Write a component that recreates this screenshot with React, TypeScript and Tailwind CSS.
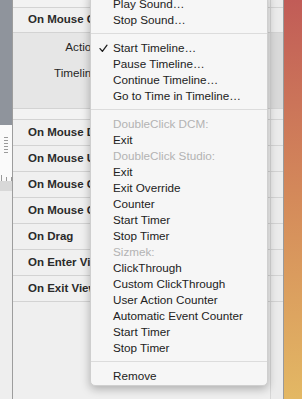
const events = [
  "On Mouse Down",
  "On Mouse Up",
  "On Mouse Click",
  "On Mouse Click Outside",
  "On Drag",
  "On Enter View",
  "On Exit View",
];

type Entry =
  | { kind: "item"; label: string; checked?: boolean }
  | { kind: "header"; label: string }
  | { kind: "sep" };

const menu: Entry[] = [
  { kind: "item", label: "Play Sound…" },
  { kind: "item", label: "Stop Sound…" },
  { kind: "sep" },
  { kind: "item", label: "Start Timeline…", checked: true },
  { kind: "item", label: "Pause Timeline…" },
  { kind: "item", label: "Continue Timeline…" },
  { kind: "item", label: "Go to Time in Timeline…" },
  { kind: "sep" },
  { kind: "header", label: "DoubleClick DCM:" },
  { kind: "item", label: "Exit" },
  { kind: "header", label: "DoubleClick Studio:" },
  { kind: "item", label: "Exit" },
  { kind: "item", label: "Exit Override" },
  { kind: "item", label: "Counter" },
  { kind: "item", label: "Start Timer" },
  { kind: "item", label: "Stop Timer" },
  { kind: "header", label: "Sizmek:" },
  { kind: "item", label: "ClickThrough" },
  { kind: "item", label: "Custom ClickThrough" },
  { kind: "item", label: "User Action Counter" },
  { kind: "item", label: "Automatic Event Counter" },
  { kind: "item", label: "Start Timer" },
  { kind: "item", label: "Stop Timer" },
  { kind: "sep" },
  { kind: "item", label: "Remove" },
];

function Row({ children, className = "", side = "bg-[#ebebeb]" }: { children?: React.ReactNode; className?: string; side?: string }) {
  return (
    <div className={`flex shrink-0 border-b border-[#d3d3d3] ${className}`}>
      <div className="min-w-0 flex-1 overflow-hidden">{children}</div>
      <div className={`w-[13px] shrink-0 border-l border-[#d6d6d6] ${side}`} />
    </div>
  );
}

function Check() {
  return (
    <svg width="9" height="9" viewBox="0 0 9 9" fill="none">
      <path d="M1 4.6 L3.4 7.4 L8 1.2" stroke="#1f1f1f" strokeWidth="1.3" strokeLinecap="round" strokeLinejoin="round" />
    </svg>
  );
}

export default function App() {
  return (
    <div className="relative flex h-[399px] w-[302px] overflow-hidden bg-[#efefef] font-['Liberation_Sans',Arial,sans-serif]">
      {/* canvas edge with ruler */}
      <div className="flex w-[13px] shrink-0 flex-col border-r border-[#9d9d9d]">
        <div className="h-[125px] bg-[#8f949c]" />
        <div className="flex h-[56px] flex-col items-center bg-[#fafafa] pt-[12px]">
          <svg width="12" height="44" viewBox="0 0 12 44">
            <g stroke="#9a9a9a" strokeWidth="1">
              <path d="M4 0.5h4M4 3.5h4M4 6.5h4M4 9.5h4M4 12.5h4M4 15.5h4" />
              <path d="M1.5 38v6M6.5 40v4M11.5 40v4" />
            </g>
          </svg>
        </div>
        <div className="h-[10px] bg-[#d8d8d8]" />
        <div className="flex-1 bg-[#eeeeee]" />
      </div>

      {/* event list */}
      <div className="flex flex-1 flex-col">
        <Row className="h-[8px] bg-[#f2f2f2]" />
        <Row className="h-[25px] bg-[#f0f0f0]">
          <div className="flex h-full items-center pl-[15px] text-[11.5px] font-bold text-[#2a2a2a]">On Mouse Click</div>
        </Row>
        <Row className="h-[76px] bg-[#e6e6e6]" side="bg-[#d9d9d9]">
          <div className="flex flex-col gap-[10px] pt-[6px] text-[11.7px] text-[#262626]">
            <div className="flex h-[16px] w-[88px] items-center justify-end">Action:</div>
            <div className="flex h-[16px] w-[88px] items-center justify-end">Timeline:</div>
          </div>
        </Row>
        <Row className="h-[11px] bg-[#f3f3f3]" />
        {events.map((e) => (
          <Row key={e} className="h-[26px] bg-[#f0f0f0]">
            <div className="flex h-full items-center pl-[15px] text-[11.5px] font-bold text-[#2a2a2a] whitespace-nowrap">{e}</div>
          </Row>
        ))}
        <div className="flex flex-1">
          <div className="flex-1 bg-[#efefef]" />
          <div className="w-[13px] border-l border-[#d6d6d6] bg-[#ebebeb]" />
        </div>
      </div>

      {/* timeline colour strip */}
      <div className="w-[19px] shrink-0 border-l border-[#9a9a9a] bg-gradient-to-b from-[#c15c57] via-[#d48a5a] to-[#e3b864]" />

      {/* popup menu */}
      <div className="absolute left-[90px] top-[-9px] w-[178px] rounded-[5px] border border-[#cfcfcf] bg-[#f6f6f6] pb-[1px] pt-[4px] text-[11.7px] text-[#222] shadow-[0_3px_10px_rgba(0,0,0,0.28)]">
        {menu.map((m, i) =>
          m.kind === "sep" ? (
            <div key={i} className="mb-[6px] mt-[5px] h-px bg-[#dcdcdc]" />
          ) : (
            <div key={i} className={`flex h-[16px] items-center whitespace-nowrap ${m.kind === "header" ? "text-[#b3b3b3]" : ""}`}>
              <div className="flex w-[22px] shrink-0 justify-center pl-[2px]">{m.kind === "item" && m.checked ? <Check /> : null}</div>
              {m.label}
            </div>
          ),
        )}
      </div>
    </div>
  );
}
